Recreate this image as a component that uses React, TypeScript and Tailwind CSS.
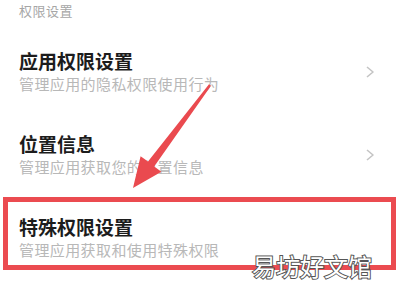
const Chevron = () => (
  <svg width="10" height="12" viewBox="0 0 10 12" className="shrink-0">
    <polyline points="2,1 8,6 2,11" fill="none" stroke="#c4c4c4" strokeWidth="1.6" strokeLinejoin="round" />
  </svg>
);

interface RowProps {
  title: string;
  subtitle: string;
}

const RowText = ({ title, subtitle }: RowProps) => (
  <div className="flex flex-col">
    <div className="text-[19px] leading-[24px] font-semibold text-[#1c1c1c]">{title}</div>
    <div className="mt-[1px] text-[15px] leading-[20px] tracking-[0.4px] text-[#b8b8b8]">{subtitle}</div>
  </div>
);

// red arrow drawn over the list
const Arrow = () => (
  <svg className="absolute left-0 top-0 pointer-events-none" width="400" height="300" viewBox="0 0 400 300">
    <polygon
      points="211,85.8 154.2,166.4 161.4,171.8 133,188 140.6,156.2 148,161.6 209,84.2"
      fill="#ea4a4f"
    />
  </svg>
);

export default function App() {
  return (
    <div
      className="relative w-[400px] h-[300px] overflow-hidden bg-white"
      style={{ fontFamily: '"Noto Sans CJK SC", "Noto Sans", sans-serif' }}
    >
      <div className="pl-[19px] pt-[1px] h-[40px] text-[13px] leading-[20px] tracking-[0.5px] text-[#a6a6a6]">
        权限设置
      </div>

      <div className="h-[83px] pl-[19px] pr-[25px] pt-[9px]">
        <div className="flex items-center justify-between">
          <RowText title="应用权限设置" subtitle="管理应用的隐私权限使用行为" />
          <Chevron />
        </div>
      </div>

      <div className="h-[74px] pl-[19px] pr-[25px] pt-[9px]">
        <div className="flex items-center justify-between">
          <RowText title="位置信息" subtitle="管理应用获取您的位置信息" />
          <Chevron />
        </div>
      </div>

      <div className="ml-[3px] mr-[4px] border-[5px] border-[#eb4b50] pl-[11px] pt-[13px] pb-[5px]">
        <RowText title="特殊权限设置" subtitle="管理应用获取和使用特殊权限" />
      </div>

      <Arrow />

      <div className="absolute left-[252px] top-[251px] text-[24px] leading-[30px] text-white [-webkit-text-stroke:2px_#555555] [paint-order:stroke_fill]">
        易坊好文馆
      </div>
    </div>
  );
}
